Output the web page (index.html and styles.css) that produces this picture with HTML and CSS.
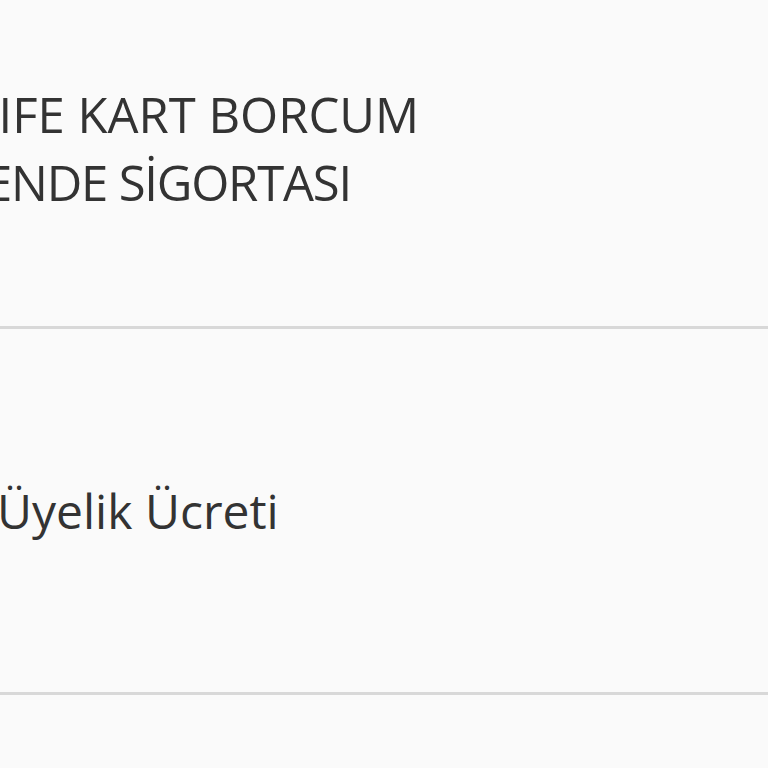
FILE: index.html
```html
<!DOCTYPE html>
<html lang="tr">
<head>
    <meta charset="UTF-8">
    <meta name="viewport" content="width=device-width, initial-scale=1.0">
    <title>Ödemeler</title>
    <link rel="stylesheet" href="styles.css">
</head>
<body>
    <ul class="list">
        <li class="row">
            <div class="label label-double">
                <span class="line line-first">LIFE KART BORCUM</span>
                <span class="line line-second">ENDE SİGORTASI</span>
            </div>
        </li>
        <li class="row">
            <div class="label">
                <span class="line line-single">Üyelik Ücreti</span>
            </div>
        </li>
        <li class="row"></li>
    </ul>
</body>
</html>
```

FILE: styles.css
```css
html, body{
    margin: 0;
    padding: 0;
    background: #fafafa;
    overflow: hidden;
}
.list{
    list-style: none;
    margin: -37px 0 0 0;
    padding: 0;
}
.row{
    display: flex;
    align-items: center;
    height: 363px;
    border-bottom: 3px solid #d8d8d8;
    font-family: "Open Sans", "Noto Sans", sans-serif;
    color: #333;
    font-size: 48px;
    line-height: 67px;
}
.label{
    display: flex;
    flex-direction: column;
}
.label-double{
    font-size: 49px;
    line-height: 68px;
    padding-top: 6px;
}
.line{
    white-space: nowrap;
}
.line-first{
    margin-left: -27px;
}
.line-second{
    margin-left: -15px;
    letter-spacing: -1.2px;
}
.line-single{
    margin-left: -3px;
}
```
